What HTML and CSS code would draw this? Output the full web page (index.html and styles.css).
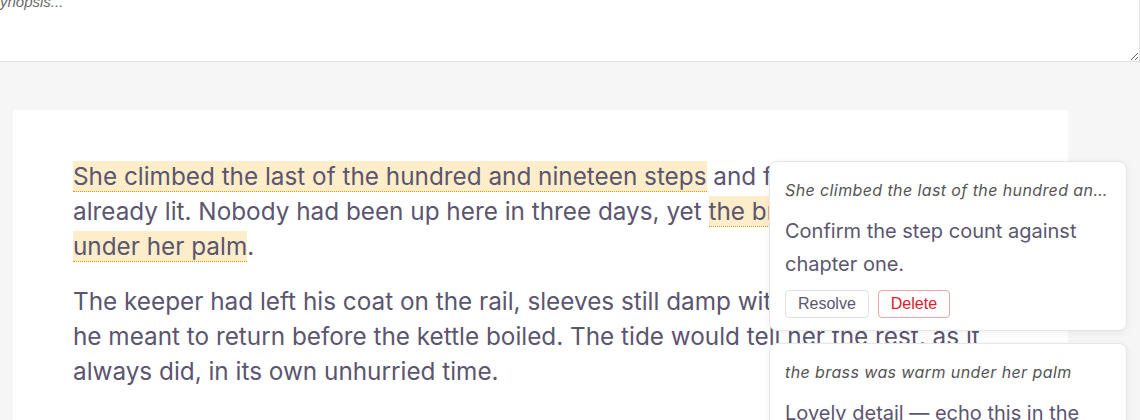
FILE: index.html
```html
<!DOCTYPE html>
<html lang="en">
<head>
    <meta charset="UTF-8">
    <meta name="viewport" content="width=device-width, initial-scale=1.0">
    <title>Chapter Draft</title>
    <link rel="stylesheet" href="styles.css">
</head>
<body>

    <div class="synopsis">
        <textarea class="synopsis-input" placeholder="Synopsis..."></textarea>
    </div>

    <main class="workspace">
        <article class="paper">
            <p>
                <mark class="note-mark">She climbed the last of the hundred and nineteen steps</mark> and found the lamp
                already lit. Nobody had been up here in three days, yet <mark class="note-mark">the brass was warm
                under her palm</mark>.
            </p>
            <p>
                The keeper had left his coat on the rail, sleeves still damp with spray, as though
                he meant to return before the kettle boiled. The tide would tell her the rest, as it
                always did, in its own unhurried time.
            </p>
        </article>

        <aside class="comment first">
            <div class="quote">She climbed the last of the hundred and nineteen steps</div>
            <div class="body">Confirm the step count against chapter one.</div>
            <div class="actions">
                <button class="btn">Resolve</button>
                <button class="btn danger">Delete</button>
            </div>
        </aside>

        <aside class="comment second">
            <div class="quote">the brass was warm under her palm</div>
            <div class="body">Lovely detail — echo this in the closing scene.</div>
            <div class="actions">
                <button class="btn">Resolve</button>
                <button class="btn danger">Delete</button>
            </div>
        </aside>
    </main>

</body>
</html>
```

FILE: styles.css
```css
/* styles.css */

body {
    margin: 0;
    font-family: Inter, "Noto Sans", sans-serif;
    background-color: #f6f6f6;
    overflow: hidden;
}

.synopsis {
    background-color: #fff;
    height: 62px;
    overflow: hidden;
}

.synopsis-input {
    display: block;
    box-sizing: border-box;
    width: calc(100% + 20px);
    height: 82px;
    margin: -20px 0 0 -20px;
    padding: 12px 12px 12px 9px;
    border: 1px solid #e2e2e2;
    font-family: "Liberation Sans", Arial, sans-serif;
    font-size: 15px;
    font-style: italic;
    color: #555;
    resize: vertical;
}

.synopsis-input::placeholder {
    color: #6b6b6b;
}

.workspace {
    position: relative;
    padding: 48px 0 0 13px;
}

.paper {
    width: 1055px;
    box-sizing: border-box;
    background-color: #fff;
    padding: 49px 60px 60px;
    color: #5b5670;
    font-size: 24.3px;
    line-height: 35px;
}

.paper p {
    margin: 0 0 20px;
}

.note-mark {
    background-color: #fdedc9;
    color: inherit;
    border-bottom: 1px dotted #d4a017;
}

/* margin notes sit over the page, next to the passage they belong to */
.comment {
    position: absolute;
    left: 769px;
    width: 358px;
    box-sizing: border-box;
    padding: 16px 15px 12px;
    background-color: #fff;
    border: 1px solid #e6e6e6;
    border-radius: 8px;
    box-shadow: 0 2px 8px rgba(0, 0, 0, 0.06);
    color: #5b5670;
}

.comment.first {
    top: 99px;
}

.comment.second {
    top: 281px;
}

.quote {
    font-size: 16px;
    font-style: italic;
    letter-spacing: 0.4px;
    color: #555;
    white-space: nowrap;
    overflow: hidden;
    text-overflow: ellipsis;
    line-height: 24px;
}

.body {
    font-size: 20px;
    line-height: 33px;
    margin-top: 13px;
}

.actions {
    display: flex;
    gap: 9px;
    margin-top: 9px;
}

.btn {
    font-family: "Liberation Sans", Arial, sans-serif;
    font-size: 16px;
    color: #5b5670;
    background-color: #fff;
    border: 1px solid #e2e2e2;
    border-radius: 4px;
    padding: 4px 12px;
    cursor: pointer;
}

.btn.danger {
    color: #e0182a;
    border-color: #f3a3a6;
}
```
